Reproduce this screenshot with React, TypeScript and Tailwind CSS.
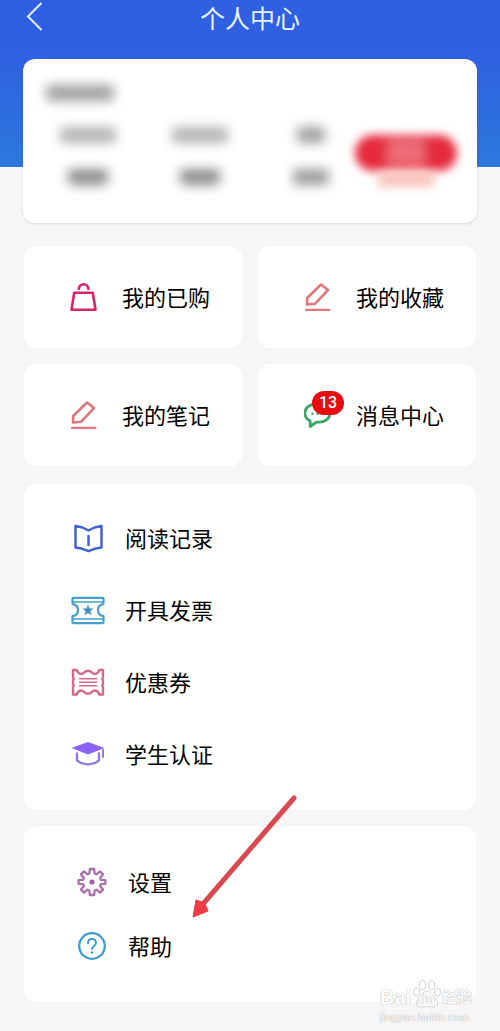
import type { ReactNode } from 'react';

const BagIcon = () => (
  <svg viewBox="0 0 28 32" className="w-7 h-8" fill="none" stroke="#d8246f" strokeWidth="2.6" strokeLinejoin="round" strokeLinecap="round">
    <path d="M4.2 11.800h18.600l2.700 17h-24z" />
    <path d="M8.800 8a4.800 4.800 0 0 1 9.600 0" />
  </svg>
);

const PencilIcon = () => (
  <svg viewBox="0 0 28 32" className="w-7 h-8" fill="none" stroke="#e0777b" strokeWidth="2.6" strokeLinejoin="round" strokeLinecap="round">
    <path d="M17 3.500L24 9 11 22.800 3 23.500 3.200 17z" />
    <path d="M2 28.800h23.500" strokeWidth="2.200" />
  </svg>
);

const ChatIcon = () => (
  <svg viewBox="0 0 28 32" className="w-7 h-8" fill="none" stroke="#3aa568" strokeWidth="2.800" strokeLinejoin="round">
    <path d="M12 5h3c6 0 11 3.800 11 9s-5 9.200-11 9.200h-2.500L6.200 27.500V22C2.800 20.300.800 17.500.800 14c0-5.200 5-9 11.200-9z" />
    <g fill="#3aa568" stroke="none">
      <circle cx="8.500" cy="14.800" r="1.200" />
      <circle cx="13.500" cy="14.800" r="1.200" />
      <circle cx="18.500" cy="14.800" r="1.200" />
    </g>
  </svg>
);

const BookIcon = () => (
  <svg viewBox="0 0 34 32" className="w-[34px] h-8" fill="none" stroke="#4263d0" strokeWidth="2.500" strokeLinejoin="round" strokeLinecap="round">
    <path d="M4.500 4l7 1.500 6 3 6-3 7-1.500v21.500l-7 1.300-6 2.400-6-2.400-7-1.300z" />
    <path d="M17.500 14v9" />
  </svg>
);

const InvoiceIcon = () => (
  <svg viewBox="0 0 34 32" className="w-[34px] h-8" fill="none" stroke="#469fc6" strokeWidth="2.200" strokeLinejoin="round">
    <path d="M2.500 3.800h29c.7 0 1 .3 1 1v5c-3.300.6-5.500 3.200-5.500 6.200s2.200 5.600 5.500 6.200v6c0 .7-.3 1-1 1h-29c-.7 0-1-.3-1-1v-6C4.800 21.600 7 19 7 16s-2.200-5.600-5.500-6.200v-5c0-.7.3-1 1-1z" />
    <path d="M2 8h30M2 25h30" strokeWidth="1.500" />
    <path d="M17 10.500l1.500 3.900 4.100.2-3.200 2.600 1.100 4-3.500-2.300-3.500 2.300 1.100-4-3.200-2.600 4.100-.2z" fill="#3d8fc0" stroke="none" />
  </svg>
);

const CouponIcon = () => (
  <svg viewBox="0 0 34 32" className="w-[34px] h-8" fill="none" stroke="#d9668d" strokeWidth="2.400" strokeLinejoin="round" strokeLinecap="round">
    <path d="M2 4h3.800c.8 2.800 2.400 4 4.700 4 2.200 0 3-3.200 6.500-3.200S21.300 8 23.500 8c2.300 0 3.900-1.200 4.700-4H32v7.500l-.8 1.500.8 1.500v3.500l-.8 1.500.8 1.500v7.500h-3.800c-.8-2.800-2.400-4-4.700-4-2.200 0-3 3.200-6.500 3.200s-4.300-3.200-6.500-3.200c-2.300 0-3.900 1.200-4.700 4H2V21l.8-1.500L2 18v-3.500l.8-1.500L2 11.500z" />
    <path d="M8.500 12.700h17M8.500 16.200h17M8.500 19.700h17" strokeWidth="1.500" />
  </svg>
);

const CapIcon = () => (
  <svg viewBox="0 0 34 32" className="w-[34px] h-8" fill="none" stroke="#9078e0" strokeWidth="2.300" strokeLinejoin="round" strokeLinecap="round">
    <path d="M.500 10L17 4l16.500 6L17 16.500z" fill="#8b63f5" stroke="none" />
    <path d="M6 15.500v7l3.500 2.300L17 26.500l7.500-1.700 3.500-2.300v-7" />
    <path d="M32 12v7" strokeWidth="2" />
  </svg>
);

const SettingsIcon = () => (
  <svg viewBox="-16 -16 32 32" className="w-8 h-8" fill="none" stroke="#ac6fae" strokeWidth="2.300" strokeLinejoin="round">
    <path d="M-2.200-13h4.400l.4 4.500 1.900.8 3.500-2.900 3 3-2.900 3.500.8 1.900 4.500.4v3.600l-4.500.4-.8 1.900 2.900 3.500-3 3-3.500-2.900-1.900.8-.4 4.500h-4.400l-.4-4.500-1.900-.8-3.500 2.900-3-3 2.900-3.500-.8-1.900-4.500-.4v-3.600l4.500-.4.8-1.900-2.900-3.500 3-3 3.500 2.900 1.900-.8z" />
    <circle r="2.600" fill="#a45fa6" stroke="none" />
  </svg>
);

const HelpIcon = () => (
  <svg viewBox="-16 -16 32 32" className="w-8 h-8" fill="none" stroke="#429bd0" strokeWidth="2.300" strokeLinecap="round">
    <circle r="12.800" />
    <path d="M-4-2.800c0-2.500 1.700-4.200 4-4.200s4 1.500 4 3.800c0 3-4 3.200-4 6.200" strokeWidth="1.900" />
    <circle cy="6.500" r="1.300" fill="#429bd0" stroke="none" />
  </svg>
);

interface MenuItem {
  title: string;
  icon: ReactNode;
  badge?: number;
}

const shortcuts: MenuItem[] = [
  { title: '我的已购', icon: <BagIcon /> },
  { title: '我的收藏', icon: <PencilIcon /> },
  { title: '我的笔记', icon: <PencilIcon /> },
  { title: '消息中心', icon: <ChatIcon />, badge: 13 },
];

const records: MenuItem[] = [
  { title: '阅读记录', icon: <BookIcon /> },
  { title: '开具发票', icon: <InvoiceIcon /> },
  { title: '优惠券', icon: <CouponIcon /> },
  { title: '学生认证', icon: <CapIcon /> },
];

const system: MenuItem[] = [
  { title: '设置', icon: <SettingsIcon /> },
  { title: '帮助', icon: <HelpIcon /> },
];

// Widths of the two hidden lines in each account column
const stats = [
  { value: 'w-14 bg-[#b4b4b4]', label: 'w-10 bg-[#8c8c8c]' },
  { value: 'w-14 bg-[#b4b4b4]', label: 'w-10 bg-[#8c8c8c]' },
  { value: 'w-7 bg-[#a0a0a0]', label: 'w-9 bg-[#9c9c9c]' },
];

const ProfileCard = () => (
  <section className="h-[164px] rounded-xl bg-white pt-[26px] pl-[35px] pr-5 shadow-sm">
    <div className="-ml-3 h-4 w-17 rounded bg-[#a0a0a0] blur-[6px]" />
    <div className="mt-[26px] flex">
      <div className="flex flex-1 justify-between">
        {stats.map((stat, index) => (
          <div key={index} className="flex w-15 flex-col items-center gap-[26px]">
            <div className={`h-4 rounded blur-[6px] ${stat.value}`} />
            <div className={`h-4 rounded blur-[6px] ${stat.label}`} />
          </div>
        ))}
      </div>
      <div className="ml-3.5 mt-2 flex w-[102px] flex-col items-center">
        <div className="flex h-9 w-full items-center justify-center rounded-full bg-[#e52a3c] blur-[5px]">
          <div className="h-7 w-10 bg-[#ec6e78] blur-[3px]" />
        </div>
        <div className="h-4 w-14 bg-[#f8c4bc] blur-[5px]" />
      </div>
    </div>
  </section>
);

const ListRow = ({ title, icon }: MenuItem) => (
  <a href="#" className="flex items-center text-[22px] leading-8 text-black">
    {icon}
    <span className="ml-5 pb-0.5">{title}</span>
  </a>
);

const Arrow = () => (
  <svg viewBox="0 0 110 126" className="pointer-events-none absolute right-[200px] top-[793px] h-[126px] w-[110px]">
    <path d="M104 5L13 111" stroke="#d94a50" strokeWidth="5" strokeLinecap="round" />
    <path d="M3 124L6 107l6 2 4 4 2 5z" fill="#ee3b44" stroke="#ee3b44" strokeLinejoin="round" />
  </svg>
);

const Watermark = () => (
  <div className="pointer-events-none absolute bottom-1.5 right-7 w-[92px] font-['Liberation_Sans','Noto_Sans_CJK_SC',sans-serif] text-white [text-shadow:0_0_1px_#aaa,0_0_1px_#bbb]">
    <div className="flex items-end justify-between text-xl font-bold leading-6">
      <span>Bai</span>
      <span className="relative flex w-7 justify-center">
        <svg viewBox="0 0 28 30" className="absolute bottom-0 h-[30px] w-7" fill="#fff" stroke="#d2d2d2" strokeWidth="1">
          <ellipse cx="9.500" cy="6" rx="3.200" ry="4.600" />
          <ellipse cx="18.500" cy="6" rx="3.200" ry="4.600" />
          <ellipse cx="3.500" cy="13" rx="3" ry="4" />
          <ellipse cx="24.500" cy="13" rx="3" ry="4" />
          <path d="M14 12c4 0 5 4 8 7 4 4 3 9-2 9-3 0-4-.5-6-.5s-3 .5-6 .5c-5 0-6-5-2-9 3-3 4-7 8-7z" />
        </svg>
        <span className="relative text-sm leading-5">du</span>
      </span>
      <span className="text-[15px]">经验</span>
    </div>
    <div className="text-[11px] leading-4">jingyan.baidu.com</div>
  </div>
);

const App = () => {
  return (
    <div className="relative min-h-screen bg-[#f6f6f6] pb-[29px] font-['Noto_Sans_CJK_SC',sans-serif]">
      {/* Header */}
      <header className="h-[167px] bg-linear-to-b from-[#3060e2] from-30% to-[#2b78dc]">
        <div className="grid h-[34px] grid-cols-3 items-center px-6">
          <button type="button" aria-label="返回" className="w-5">
            <svg viewBox="0 0 20 32" className="h-8 w-5" fill="none" stroke="#e4eeff" strokeWidth="2">
              <path d="M17.500 2L4 15.500 17.500 29" />
            </svg>
          </button>
          <h1 className="text-center text-[25px] leading-8 whitespace-nowrap text-[#e8f4ff]">个人中心</h1>
        </div>
      </header>

      <main className="-mt-[108px] px-6">
        <div className="-mx-px">
          <ProfileCard />
        </div>

        {/* Shortcuts */}
        <div className="mt-[23px] grid grid-cols-2 gap-4">
          {shortcuts.map((item) => (
            <a
              key={item.title}
              href="#"
              className="flex h-[102px] items-center rounded-xl bg-white pl-[46px] text-[22px] leading-8 text-black"
            >
              <span className="relative">
                {item.icon}
                {item.badge && (
                  <span className="absolute -top-2 left-2 flex h-6 w-8 items-center justify-center rounded-full bg-[#e60c10] font-[Roboto,sans-serif] text-base font-medium text-white">
                    {item.badge}
                  </span>
                )}
              </span>
              <span className="ml-6 pb-0.5">{item.title}</span>
            </a>
          ))}
        </div>

        <nav className="mt-[18px] rounded-xl bg-white pt-[18px] pb-5 pl-[47px]">
          {records.map((item) => (
            <div key={item.title} className="flex h-18 items-center">
              <ListRow {...item} />
            </div>
          ))}
        </nav>

        <nav className="mt-4 rounded-xl bg-white py-6 pl-[52px]">
          {system.map((item) => (
            <div key={item.title} className="flex h-16 items-center">
              <ListRow {...item} />
            </div>
          ))}
        </nav>
      </main>

      <Arrow />
      <Watermark />
    </div>
  );
};

export default App;
